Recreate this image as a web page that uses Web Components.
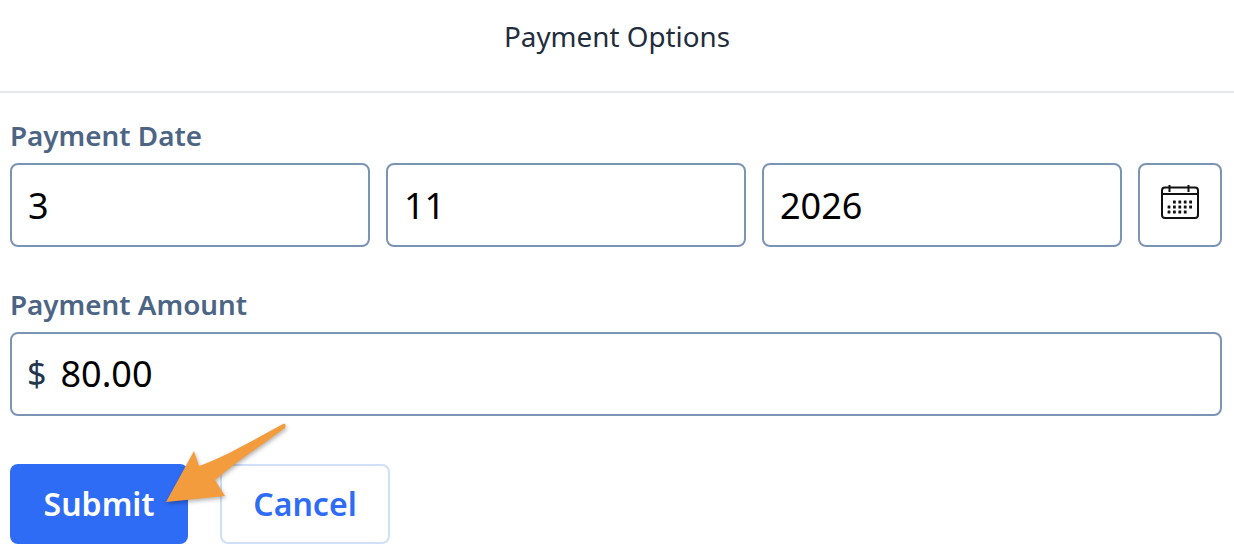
<!DOCTYPE html>
<html>
<head>
<meta charset="utf-8">
<title>Payment Options</title>
<style>
  html, body { margin: 0; padding: 0; background: #fff; overflow: hidden; }
  body { font-family: "Noto Sans", "Open Sans", sans-serif; width: 1234px; height: 548px; }
</style>
</head>
<body>
<payment-form></payment-form>
<script>
class PanelHeader extends HTMLElement {
  constructor() {
    super();
    this.attachShadow({ mode: "open" });
    this.shadowRoot.innerHTML = `
      <style>
        :host {
          display: flex;
          height: 93px;
          justify-content: center;
          padding-top: 18px;
          box-sizing: border-box;
          border-bottom: 2px solid #e6e8ea;
          font-size: 27.8px;
          line-height: 37px;
          color: #1f2d3d;
        }
      </style>
      <slot></slot>
    `;
  }
}

class FieldLabel extends HTMLElement {
  constructor() {
    super();
    this.attachShadow({ mode: "open" });
    this.shadowRoot.innerHTML = `
      <style>
        :host {
          display: block;
          font-size: 27.8px;
          font-weight: 600;
          line-height: 36px;
          color: #4d6585;
        }
      </style>
      <slot></slot>
    `;
  }
}

class TextBox extends HTMLElement {
  constructor() {
    super();
    this.attachShadow({ mode: "open" });
    this.shadowRoot.innerHTML = `
      <style>
        :host {
          display: flex;
          align-items: center;
          gap: 14px;
          height: 84px;
          box-sizing: border-box;
          padding: 0 16px;
          border: 2px solid #7b94b4;
          border-radius: 8px;
          font-size: 36px;
          color: #000;
          background: #fff;
        }
        :host([prefix]) { padding: 0 15px 2px; }
        .prefix { font-size: 34px; color: #24364b; }
        .prefix:empty { display: none; }
      </style>
      <span class="prefix"></span>
      <slot></slot>
    `;
  }
  connectedCallback() {
    this.shadowRoot.querySelector(".prefix").textContent = this.getAttribute("prefix") || "";
  }
}

class CalendarButton extends HTMLElement {
  constructor() {
    super();
    this.attachShadow({ mode: "open" });
    const cols = [8, 13.4, 18.8, 24.2, 29.6];
    const rows = [[17, 1, 4], [22, 0, 4], [27, 0, 3]];
    const dots = rows.flatMap(([y, from, to]) =>
      cols.slice(from, to + 1).map((x) => `<rect x="${x - 1.4}" y="${y - 1.4}" width="2.8" height="2.8" rx="0.5"/>`)
    ).join("");
    this.shadowRoot.innerHTML = `
      <style>
        :host {
          display: flex;
          align-items: center;
          justify-content: center;
          width: 84px;
          height: 84px;
          box-sizing: border-box;
          border: 2px solid #7b94b4;
          border-radius: 8px;
          background: #fff;
        }
        svg { display: block; margin-top: -6px; }
      </style>
      <svg width="38" height="34" viewBox="0 0 38 34" fill="none">
        <rect x="1" y="2.5" width="36" height="30.5" rx="3" stroke="#111" stroke-width="2"/>
        <path d="M1.5 9H36.5" stroke="#111" stroke-width="2"/>
        <path d="M8.5 0V7M27.5 0V7" stroke="#111" stroke-width="2"/>
        <g fill="#111">${dots}</g>
      </svg>
    `;
  }
}

class ActionButton extends HTMLElement {
  constructor() {
    super();
    this.attachShadow({ mode: "open" });
    this.shadowRoot.innerHTML = `
      <style>
        :host {
          display: flex;
          align-items: center;
          justify-content: center;
          height: 80px;
          box-sizing: border-box;
          padding-bottom: 2px;
          border-radius: 8px;
          font-size: 32px;
          font-weight: 600;
        }
        :host([variant="primary"]) { background: #2f6cf6; color: #fff; width: 178px; }
        :host([variant="secondary"]) { background: #fff; color: #2f6cf6; width: 170px; border: 2px solid #cfe0f8; }
      </style>
      <slot></slot>
    `;
  }
}

class PaymentForm extends HTMLElement {
  constructor() {
    super();
    this.attachShadow({ mode: "open" });
    this.shadowRoot.innerHTML = `
      <style>
        :host { display: block; position: relative; height: 548px; }
        main { display: flex; flex-direction: column; padding: 24px 12px 0 10px; }
        .date-row { display: grid; grid-template-columns: 360px 360px 360px 84px; gap: 16px; margin-top: 10px; }
        .amount-label { margin-top: 39px; }
        .amount { margin-top: 10px; }
        .actions { display: flex; gap: 32px; margin-top: 48px; }
        .arrow { position: absolute; left: 160px; top: 418px; filter: drop-shadow(1px 2px 2px rgba(0,0,0,.3)); }
      </style>
      <panel-header>Payment Options</panel-header>
      <main>
        <field-label>Payment Date</field-label>
        <div class="date-row">
          <text-box>3</text-box>
          <text-box>11</text-box>
          <text-box>2026</text-box>
          <calendar-button></calendar-button>
        </div>
        <field-label class="amount-label">Payment Amount</field-label>
        <text-box class="amount" prefix="$">80.00</text-box>
        <div class="actions">
          <action-button variant="primary">Submit</action-button>
          <action-button variant="secondary">Cancel</action-button>
        </div>
      </main>
      <svg class="arrow" width="134" height="90" viewBox="160 418 134 90">
        <path fill="#f39c3d" d="M166 502 L194 451 L199 466 C225 457 255 439 283 424 Q287 423 285 428 C265 443 240 459 215 480 L225 496 Z"/>
      </svg>
    `;
  }
}

customElements.define("panel-header", PanelHeader);
customElements.define("field-label", FieldLabel);
customElements.define("text-box", TextBox);
customElements.define("calendar-button", CalendarButton);
customElements.define("action-button", ActionButton);
customElements.define("payment-form", PaymentForm);
</script>
</body>
</html>
